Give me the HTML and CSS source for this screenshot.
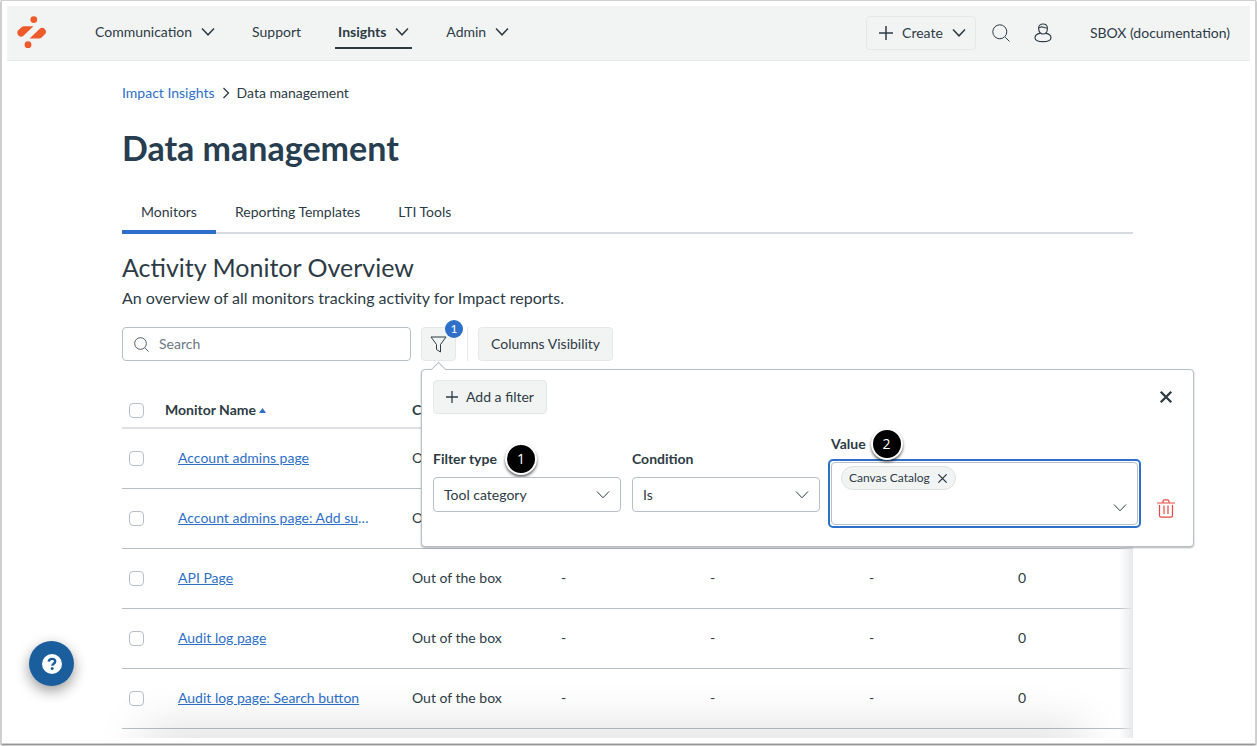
FILE: index.html
```html
<!DOCTYPE html>
<html lang="en">
  <head>
    <meta charset="UTF-8" />
    <meta name="viewport" content="width=device-width, initial-scale=1.0" />
    <title>Data management | Impact Insights</title>
    <link rel="stylesheet" href="styles.css">
  </head>
  <body>
    <!-- Shared icons -->
    <svg class="sprite" aria-hidden="true">
      <symbol id="chevron" viewBox="0 0 14 14">
        <path d="M1 3.500 7 9.800 13 3.500" fill="none" stroke="currentColor" />
      </symbol>
      <symbol id="plus" viewBox="0 0 14 14">
        <path d="M7 0v14M0 7h14" fill="none" stroke="currentColor" />
      </symbol>
      <symbol id="search" viewBox="0 0 18 18">
        <path d="M13.3 13.3 17.4 17.4" fill="none" stroke="currentColor" />
        <circle cx="7.8" cy="7.8" r="7" fill="none" stroke="currentColor" />
      </symbol>
      <symbol id="cross" viewBox="0 0 12 12">
        <path d="M1.5 1.5l9 9M10.5 1.5l-9 9" fill="none" stroke="currentColor" />
      </symbol>
    </svg>

    <div class="frame">
      <div class="page">
        <header class="topbar">
          <a class="logo" href="#" aria-label="Impact home">
            <svg width="30" height="34" viewBox="0 0 30 34" fill="#ee5a2a">
              <circle cx="16.8" cy="3.6" r="3.4" />
              <circle cx="11" cy="28.700" r="3.4" />
              <path d="M7 10.300h9.500L6.200 20.100A3.900 3.900 0 0 1 1 14.600L4.600 11.200Q5.600 10.300 7 10.300z" />
              <path d="M12.600 22.400 23 12.500a3.900 3.900 0 0 1 5.200 5.600L24.600 21.500Q23.600 22.400 22.200 22.400z" />
            </svg>
          </a>

          <nav class="main-nav">
            <a href="#">Communication <svg class="chev"><use href="#chevron" /></svg></a>
            <a href="#">Support</a>
            <a class="active" href="#">Insights <svg class="chev"><use href="#chevron" /></svg></a>
            <a href="#">Admin <svg class="chev"><use href="#chevron" /></svg></a>
          </nav>

          <div class="tools">
            <button class="create-btn" type="button">
              <svg class="plus"><use href="#plus" /></svg>
              Create
              <svg class="chev"><use href="#chevron" /></svg>
            </button>
            <button class="icon-btn" type="button" aria-label="Search">
              <svg width="18" height="18"><use href="#search" /></svg>
            </button>
            <button class="icon-btn" type="button" aria-label="Account">
              <svg width="18" height="20" viewBox="0 0 18 20" fill="none" stroke="currentColor" stroke-width="1.100">
                <path d="M4.600 5.200C4.600 2.500 6.500 1 9 1s4.400 1.500 4.400 4.200c0 3.300-1.700 5.800-4.400 5.800S4.600 8.500 4.600 5.200z" />
                <path d="M4.800 5.200C6.500 3.500 8 3.600 9.500 4.300s2.700.9 3.800.6" />
                <path d="M6.300 10.100C3 10.800 1 12.600 1 14.700 1 17.100 4 18.600 9 18.600s8-1.500 8-3.900c0-2.100-2-3.900-5.300-4.600" />
              </svg>
            </button>
            <a class="account" href="#">SBOX (documentation)</a>
          </div>
        </header>

        <main class="content">
          <nav class="breadcrumb" aria-label="Breadcrumb">
            <a href="#">Impact Insights</a>
            <svg width="8" height="12" viewBox="0 0 8 12"><path d="M1.500 1 6.500 6l-5 5" fill="none" stroke="currentColor" stroke-width="1.300" /></svg>
            <span>Data management</span>
          </nav>

          <h1>Data management</h1>

          <div class="tabs" role="tablist">
            <button class="tab selected" type="button" role="tab" aria-selected="true">Monitors</button>
            <button class="tab" type="button" role="tab">Reporting Templates</button>
            <button class="tab" type="button" role="tab">LTI Tools</button>
          </div>

          <h2>Activity Monitor Overview</h2>
          <p class="lead">An overview of all monitors tracking activity for Impact reports.</p>

          <div class="toolbar">
            <label class="search-box">
              <svg width="15" height="15"><use href="#search" /></svg>
              <input type="search" placeholder="Search" aria-label="Search" />
            </label>

            <div class="filter">
              <button class="filter-btn" type="button" aria-label="Filters" aria-expanded="true">
                <svg width="17" height="17" viewBox="0 0 17 17" fill="none" stroke="currentColor">
                  <path d="M1 1h15L10.500 8.500V16L6.500 13.500v-5z" />
                </svg>
              </button>
              <span class="count">1</span>

              <section class="popover" aria-label="Filters">
                <div class="popover-head">
                  <button class="btn" type="button">
                    <svg class="add-icon" width="12" height="12"><use href="#plus" /></svg>
                    Add a filter
                  </button>
                  <button class="close-btn" type="button" aria-label="Close">
                    <svg width="14" height="14"><use href="#cross" /></svg>
                  </button>
                </div>

                <div class="filter-row">
                  <div class="field">
                    <div class="label-line">
                      <label for="filterType">Filter type</label>
                      <span class="step">1</span>
                    </div>
                    <div class="select-wrap">
                      <select id="filterType"><option>Tool category</option></select>
                      <svg class="chev"><use href="#chevron" /></svg>
                    </div>
                  </div>

                  <div class="field">
                    <div class="label-line">
                      <label for="condition">Condition</label>
                    </div>
                    <div class="select-wrap">
                      <select id="condition"><option>Is</option></select>
                      <svg class="chev"><use href="#chevron" /></svg>
                    </div>
                  </div>

                  <div class="field value-field">
                    <div class="label-line">
                      <label for="value">Value</label>
                      <span class="step">2</span>
                    </div>
                    <div class="multi">
                      <div class="multi-inner">
                        <button class="chip" type="button">
                          Canvas Catalog
                          <svg width="11" height="11"><use href="#cross" /></svg>
                        </button>
                        <div class="multi-line">
                          <input id="value" type="text" />
                          <svg class="chev"><use href="#chevron" /></svg>
                        </div>
                      </div>
                    </div>
                  </div>

                  <button class="delete-btn" type="button" aria-label="Delete filter">
                    <svg width="18" height="19" viewBox="0 0 18 19" fill="none" stroke="currentColor" stroke-width="1.200">
                      <path d="M0 4h18M6 4V2.600Q6 .8 7.800.8h2.400Q12 .8 12 2.600V4M2.500 6v10.500q0 1.700 1.700 1.700h9.600q1.700 0 1.700-1.700V6M7 6.500v8.500M11 6.500v8.500" />
                    </svg>
                  </button>
                </div>
              </section>
            </div>

            <span class="divider"></span>
            <button class="btn" type="button">Columns Visibility</button>
          </div>

          <div class="table-wrap">
            <table>
              <thead>
                <tr>
                  <th class="col-check"><input type="checkbox" aria-label="Select all" /></th>
                  <th class="col-name">Monitor Name <svg width="7" height="5" viewBox="0 0 7 5"><path d="M0 5 3.500 0 7 5z" fill="#2d6fc9" /></svg></th>
                  <th class="col-origin">Category</th>
                  <th class="col-a"></th>
                  <th class="col-b"></th>
                  <th class="col-c"></th>
                  <th></th>
                </tr>
              </thead>
              <tbody>
                <tr>
                  <td><input type="checkbox" aria-label="Account admins page" /></td>
                  <td class="name"><a href="#">Account admins page</a></td>
                  <td>Out of the box</td>
                  <td>-</td>
                  <td>-</td>
                  <td>-</td>
                  <td>0</td>
                </tr>
                <tr>
                  <td><input type="checkbox" aria-label="Account admins page: Add su…" /></td>
                  <td class="name"><a href="#">Account admins page: Add su</a><span class="more">…</span></td>
                  <td>Out of the box</td>
                  <td>-</td>
                  <td>-</td>
                  <td>-</td>
                  <td>0</td>
                </tr>
                <tr>
                  <td><input type="checkbox" aria-label="API Page" /></td>
                  <td class="name"><a href="#">API Page</a></td>
                  <td>Out of the box</td>
                  <td>-</td>
                  <td>-</td>
                  <td>-</td>
                  <td>0</td>
                </tr>
                <tr>
                  <td><input type="checkbox" aria-label="Audit log page" /></td>
                  <td class="name"><a href="#">Audit log page</a></td>
                  <td>Out of the box</td>
                  <td>-</td>
                  <td>-</td>
                  <td>-</td>
                  <td>0</td>
                </tr>
                <tr>
                  <td><input type="checkbox" aria-label="Audit log page: Search button" /></td>
                  <td class="name"><a href="#">Audit log page: Search button</a></td>
                  <td>Out of the box</td>
                  <td>-</td>
                  <td>-</td>
                  <td>-</td>
                  <td>0</td>
                </tr>
              </tbody>
            </table>
          </div>
        </main>

        <button class="help-btn" type="button" aria-label="Help">
          <svg width="20" height="20" viewBox="0 0 20 20">
            <circle cx="10" cy="10" r="10" fill="#fff" />
            <path d="M6.700 7.600C7 5.800 8.300 4.900 10 4.900c1.900 0 3.200 1 3.200 2.600 0 2.200-2.900 2.200-2.900 4.200" fill="none" stroke="#1b5e9e" stroke-width="2.400" />
            <circle cx="10.200" cy="14.600" r="1.500" fill="#1b5e9e" />
          </svg>
        </button>
      </div>
    </div>
  </body>
</html>
```

FILE: styles.css
```css
:root {
  --text: #2d3b45;
  --heading: #273d50;
  --link: #2d6fc9;
  --panel: #f2f4f4;
  --line: #b9bfc8;
  --danger: #e8483f;
}

* {
  margin: 0;
  padding: 0;
  box-sizing: border-box;
}

body {
  background-color: white;
  color: var(--text);
  font-family: Lato, sans-serif;
  font-size: 14px;
  line-height: 20px;
}

button,
input,
select {
  font: inherit;
  color: inherit;
}

button {
  border: none;
  background: none;
  cursor: pointer;
}

a {
  color: inherit;
  text-decoration: none;
}

svg {
  flex: none;
}

.sprite {
  position: absolute;
  width: 0;
  height: 0;
}

.chev {
  width: 14px;
  height: 14px;
}

/* Window frame */
.frame {
  height: 100vh;
  padding: 1px 2px 3px 2px;
}

.page {
  position: relative;
  height: 100%;
  display: flex;
  flex-direction: column;
  border: 5px solid white;
  box-shadow: 0 0 0 1px #d0d0d0, 0 1px 2px 1px rgba(0, 0, 0, 0.6);
  overflow: hidden;
}

/* fade along the bottom edge */
.page::after {
  content: "";
  position: absolute;
  left: 140px;
  right: 170px;
  bottom: -20px;
  height: 20px;
  box-shadow: 0 0 50px 4px rgba(0, 0, 0, 0.2);
  pointer-events: none;
}

/* Top bar */
.topbar {
  flex: none;
  display: flex;
  align-items: center;
  height: 55px;
  padding: 0 20px 0 10px;
  background-color: var(--panel);
  border-bottom: 1px solid #e8eaea;
}

.logo {
  display: flex;
}

.main-nav {
  display: flex;
  gap: 31px;
  margin-left: 45px;
}

.main-nav a {
  display: flex;
  align-items: center;
  gap: 9px;
  height: 32px;
  padding: 0 3px;
  border-bottom: 2px solid transparent;
}

.main-nav .active {
  font-weight: 700;
  border-color: var(--text);
}

.main-nav .chev,
.create-btn svg {
  stroke-width: 1.5;
}

.tools {
  display: flex;
  align-items: center;
  margin-left: auto;
}

.create-btn {
  display: flex;
  align-items: center;
  gap: 9px;
  height: 34px;
  padding: 0 9px 0 12px;
  margin-right: 16px;
  border: 1px solid #e4e8e8;
  border-radius: 4px;
}

.plus {
  width: 14px;
  height: 14px;
}

.icon-btn {
  display: flex;
  margin-right: 24px;
}

.account {
  margin-left: 14px;
}

/* Content */
.content {
  padding: 22px 117px 0 115px;
}

.breadcrumb {
  display: flex;
  align-items: center;
  gap: 7px;
}

.breadcrumb a {
  color: var(--link);
}

h1 {
  margin-top: 21px;
  color: var(--heading);
  font-size: 34px;
  line-height: 48px;
  font-weight: 700;
}

.tabs {
  display: flex;
  margin-top: 18px;
  border-bottom: 2px solid #d7dade;
}

.tab {
  height: 44px;
  padding: 4px 19px 0;
  margin-bottom: -2px;
  border-bottom: 4px solid transparent;
}

.tab.selected {
  border-color: var(--link);
}

h2 {
  margin-top: 17px;
  font-size: 25px;
  line-height: 32px;
  font-weight: 400;
}

.lead {
  margin-top: 5px;
  font-size: 16px;
}

.toolbar {
  display: flex;
  align-items: center;
  margin-top: 19px;
}

.search-box {
  display: flex;
  align-items: center;
  gap: 10px;
  width: 289px;
  height: 34px;
  padding: 0 11px;
  border: 1px solid var(--line);
  border-radius: 4px;
}

.search-box input {
  flex: 1;
  min-width: 0;
  border: none;
  outline: none;
}

.search-box input::placeholder {
  color: #6b7780;
}

.btn,
.filter-btn {
  display: flex;
  align-items: center;
  gap: 8px;
  height: 34px;
  padding: 0 12px;
  background-color: var(--panel);
  border: 1px solid #e4e8e8;
  border-radius: 4px;
}

.add-icon {
  stroke-width: 1.5;
}

.filter {
  position: relative;
  margin-left: 10px;
}

.filter-btn {
  width: 35px;
  padding: 0 8px;
}

.count {
  position: absolute;
  top: -7px;
  right: -7px;
  width: 18px;
  height: 18px;
  border-radius: 50%;
  background-color: var(--link);
  color: white;
  font-size: 12px;
  line-height: 18px;
  text-align: center;
}

.divider {
  width: 1px;
  height: 34px;
  margin: 0 10px 0 11px;
  background-color: #e4e8e8;
}

/* Filter popover */
.popover {
  position: absolute;
  z-index: 2;
  top: 42px;
  left: 0;
  width: 773px;
  padding: 10px 11px 18px;
  background-color: white;
  border: 1px solid var(--line);
  border-radius: 4px;
  box-shadow: 0 1px 2px rgba(0, 0, 0, 0.3);
}

.popover::before {
  content: "";
  position: absolute;
  top: -6px;
  left: 11px;
  width: 10px;
  height: 10px;
  background-color: white;
  border: solid var(--line);
  border-width: 1px 0 0 1px;
  transform: rotate(45deg);
}

.popover-head {
  display: flex;
  align-items: center;
  justify-content: space-between;
}

.close-btn {
  display: flex;
  margin-right: 9px;
}

.close-btn svg {
  stroke-width: 2;
}

.filter-row {
  display: flex;
  align-items: flex-end;
  margin-top: 20px;
}

.field {
  width: 188px;
  margin: 0 11px 16px 0;
}

.label-line {
  position: relative;
  display: flex;
  gap: 8px;
  margin-bottom: 8px;
  font-weight: 700;
}

.label-line label {
  white-space: nowrap;
}

.step {
  width: 32px;
  height: 32px;
  margin: -6px 0;
  border: 2px solid white;
  border-radius: 50%;
  background-color: black;
  box-shadow: 0 2px 3px rgba(0, 0, 0, 0.6);
  color: white;
  font-family: "Open Sans", sans-serif;
  font-weight: 400;
  line-height: 27px;
  text-align: center;
}

.select-wrap {
  position: relative;
}

.select-wrap select {
  display: block;
  width: 100%;
  height: 35px;
  padding: 0 10px;
  appearance: none;
  background-color: white;
  border: 1px solid var(--line);
  border-radius: 4px;
}

.select-wrap .chev {
  position: absolute;
  top: 11px;
  right: 11px;
  pointer-events: none;
}

.value-field {
  width: 313px;
  margin: 0 16px 0 -3px;
}

.value-field .label-line {
  gap: 5px;
  margin: 0 3px 5px;
}

.multi {
  padding: 1px;
  border: 2px solid var(--link);
  border-radius: 5px;
}

.multi-inner {
  height: 63px;
  padding: 3px 10px 0 9px;
  border: 1px solid var(--line);
  border-radius: 4px;
}

.chip {
  display: flex;
  align-items: center;
  gap: 7px;
  height: 24px;
  padding: 0 7px;
  background-color: var(--panel);
  border: 1px solid #dde1e3;
  border-radius: 12px;
  font-size: 12px;
}

.chip svg {
  stroke-width: 1.5;
}

.multi-line {
  display: flex;
  align-items: center;
  height: 36px;
}

.multi-line input {
  flex: 1;
  min-width: 0;
  border: none;
  outline: none;
}

.delete-btn {
  display: flex;
  margin-bottom: 10px;
  color: var(--danger);
}

/* Monitors table */
.table-wrap {
  position: relative;
  margin-top: 32px;
}

.table-wrap::after {
  content: "";
  position: absolute;
  inset: 36px 0 -20px auto;
  width: 14px;
  background: linear-gradient(to right, rgba(230, 233, 235, 0), #e6e9eb);
}

table {
  width: 100%;
  table-layout: fixed;
  border-collapse: collapse;
}

th,
td {
  height: 60px;
  text-align: left;
  border-bottom: 1px solid var(--line);
}

th {
  height: 35px;
  border-bottom: 2px solid #dfe1e4;
}

.col-check {
  width: 43px;
}

.col-name {
  width: 247px;
}

.col-origin {
  width: 149px;
}

.col-a {
  width: 149px;
}

.col-b {
  width: 159px;
}

.col-c {
  width: 149px;
}

.name {
  padding-left: 13px;
}

.name a {
  color: var(--link);
  text-decoration: underline;
}

.more {
  color: var(--link);
}

input[type="checkbox"] {
  display: block;
  width: 15px;
  height: 15px;
  margin-left: 7px;
  appearance: none;
  background-color: white;
  border: 1px solid var(--line);
  border-radius: 4px;
}

th svg {
  vertical-align: 2px;
}

.help-btn {
  position: absolute;
  z-index: 3;
  left: 22px;
  bottom: 52px;
  display: flex;
  align-items: center;
  justify-content: center;
  width: 45px;
  height: 45px;
  border-radius: 50%;
  background-color: #1b5e9e;
  box-shadow: 0 5px 14px rgba(0, 0, 0, 0.4);
}
```
